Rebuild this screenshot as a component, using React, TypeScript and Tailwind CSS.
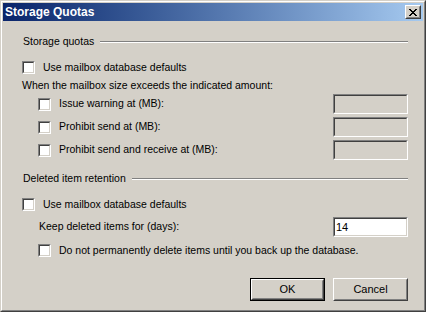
import type { ReactNode } from "react";

const Sunken = ({ className, inner, children }: { className: string; inner: string; children?: ReactNode }) => (
  <div className={`border border-t-[#808080] border-l-[#808080] border-b-white border-r-white ${className}`}>
    <div className={`h-full w-full border border-t-[#404040] border-l-[#404040] border-b-[#d4d0c8] border-r-[#d4d0c8] ${inner}`}>
      {children}
    </div>
  </div>
);

const Checkbox = () => <Sunken className="w-[13px] h-[13px] shrink-0" inner="bg-white" />;

const Field = ({ value, enabled }: { value?: string; enabled?: boolean }) => (
  <Sunken className="w-[75px] h-[20px]" inner={`flex items-center pl-[1px] text-[11px] ${enabled ? "bg-white" : "bg-[#d4d0c8]"}`}>
    {value}
  </Sunken>
);

const GroupHeader = ({ label, className }: { label: string; className: string }) => (
  <div className={`flex items-center h-[13px] pl-[20px] ${className}`}>
    <span className="leading-[13px]">{label}</span>
    <div className="flex-1 ml-[6px] h-[2px] border-t border-t-[#808080] border-b border-b-white" />
  </div>
);

const Button = ({ label, isDefault }: { label: string; isDefault?: boolean }) => (
  <div className={`w-[75px] h-[23px] ${isDefault ? "border border-black" : ""}`}>
    <div className="h-full w-full border border-t-white border-l-white border-b-[#404040] border-r-[#404040]">
      <div className="h-full w-full border border-t-[#d4d0c8] border-l-[#d4d0c8] border-b-[#808080] border-r-[#808080] flex items-center justify-center text-[11px]">
        {label}
      </div>
    </div>
  </div>
);

export default function App() {
  return (
    <div className="w-[426px] h-[312px] bg-[#d4d0c8] text-black text-[10.5px] font-['Liberation_Sans',Arial,sans-serif] border border-t-[#d4d0c8] border-l-[#d4d0c8] border-b-[#404040] border-r-[#404040]">
      <div className="h-full w-full border border-t-white border-l-white border-b-[#808080] border-r-[#808080] p-[1px] flex flex-col">
        {/* title bar */}
        <div className="h-[18px] shrink-0 flex items-center justify-between pl-[2px] pr-[2px] bg-gradient-to-r from-[#0a246a] to-[#a6caf0]">
          <span className="text-white font-bold text-[12px] leading-[18px]">Storage Quotas</span>
          <div className="w-[16px] h-[14px] border border-t-white border-l-white border-b-[#404040] border-r-[#404040]">
            <div className="h-full w-full bg-[#d4d0c8] border border-t-[#d4d0c8] border-l-[#d4d0c8] border-b-[#808080] border-r-[#808080] flex items-center justify-center">
              <svg width="8" height="7" viewBox="0 0 8 7" shapeRendering="crispEdges">
                <path d="M0 0h2v1H0zM6 0h2v1H6zM1 1h2v1H1zM5 1h2v1H5zM2 2h4v1H2zM3 3h2v1H3zM2 4h4v1H2zM1 5h2v1H1zM5 5h2v1H5zM0 6h2v1H0zM6 6h2v1H6z" fill="#000" />
              </svg>
            </div>
          </div>
        </div>

        <div className="flex flex-col pr-[15px]">
          <GroupHeader label="Storage quotas" className="mt-[14px]" />

          <div className="flex items-center h-[13px] mt-[13px] pl-[19px] gap-[8px]">
            <Checkbox />
            <span>Use mailbox database defaults</span>
          </div>

          <div className="flex items-center h-[13px] mt-[5px] pl-[19px]">
            When the mailbox size exceeds the indicated amount:
          </div>

          <div className="flex flex-col gap-[3px] mt-[2px]">
            {["Issue warning at (MB):", "Prohibit send at (MB):", "Prohibit send and receive at (MB):"].map((t) => (
              <div key={t} className="flex items-center h-[20px] pl-[35px]">
                <Checkbox />
                <span className="ml-[8px] flex-1">{t}</span>
                <Field />
              </div>
            ))}
          </div>

          <GroupHeader label="Deleted item retention" className="mt-[12px]" />

          <div className="flex items-center h-[13px] mt-[13px] pl-[19px] gap-[8px]">
            <Checkbox />
            <span>Use mailbox database defaults</span>
          </div>

          <div className="flex items-center h-[20px] mt-[6px] pl-[36px]">
            <span className="flex-1">Keep deleted items for (days):</span>
            <Field value="14" enabled />
          </div>

          <div className="flex items-center h-[13px] mt-[7px] pl-[35px] gap-[8px]">
            <Checkbox />
            <span>Do not permanently delete items until you back up the database.</span>
          </div>

          <div className="flex justify-end gap-[8px] mt-[21px]">
            <Button label="OK" isDefault />
            <Button label="Cancel" />
          </div>
        </div>
      </div>
    </div>
  );
}
